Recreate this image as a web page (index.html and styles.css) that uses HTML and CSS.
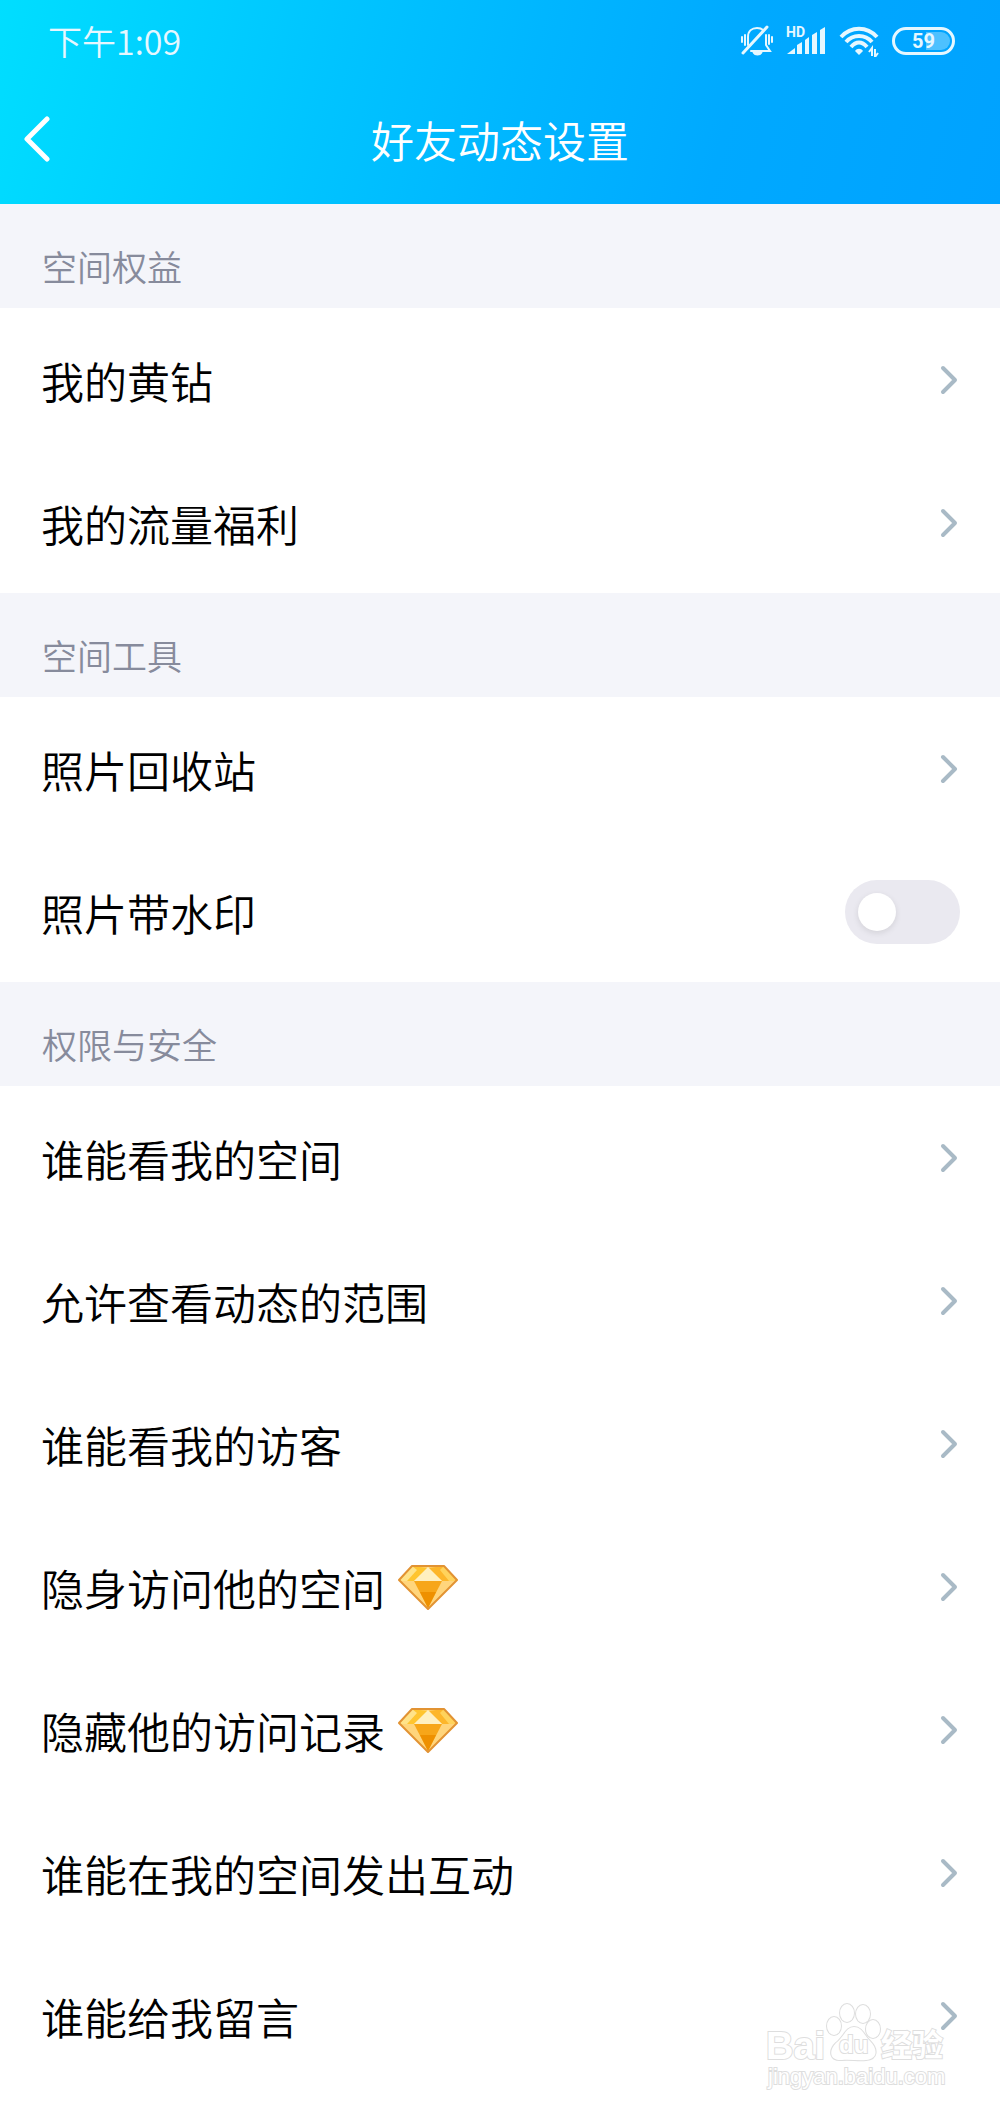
FILE: index.html
```html
<!DOCTYPE html>
<html lang="zh-CN">

<head>
  <meta charset="UTF-8">
  <meta name="viewport" content="width=device-width, initial-scale=1.0">
  <title>好友动态设置</title>
  <link rel="stylesheet" href="styles.css">
</head>

<body>
  <!-- Shapes used more than once -->
  <svg class="sprite" aria-hidden="true">
    <symbol id="arrow" viewBox="0 0 18 30">
      <path d="M3 3 L15 15 L3 27" fill="none" stroke="#a9bac6" stroke-width="4" stroke-linecap="round" stroke-linejoin="round" />
    </symbol>
    <symbol id="diamond" viewBox="0 0 60 45">
      <path d="M14 1 H46 L59 15 L30 44 L1 15 Z" fill="#ffd57c" />
      <path d="M14 1 L30 3 L16 16 H1 Z" fill="#ffc52f" />
      <path d="M46 1 L30 3 L44 16 H59 Z" fill="#fdb62a" />
      <path d="M14 1 L1 16 H9 L19 5 Z" fill="#ffe389" />
      <path d="M46 1 L59 16 H51 L42 5 Z" fill="#ffd35c" />
      <path d="M30 2 L44 16 H16 Z" fill="#fff0c0" />
      <path d="M16 16 H44 L30 43 Z" fill="#f7a619" />
      <path d="M22 27 H38 L30 43 Z" fill="#ee9000" />
      <path d="M14 1 H46 L59 15 L30 44 L1 15 Z" fill="none" stroke="#e29333" stroke-width="2" stroke-linejoin="round" />
    </symbol>
  </svg>

  <header class="header">
    <div class="status-bar">
      <span class="time">下午1:09</span>
      <div class="status-icons">
        <!-- Muted bell -->
        <svg width="32" height="32" viewBox="0 0 32 32" fill="none" stroke="#e6f7ff" stroke-width="2" stroke-linecap="round">
          <path d="M7 20 V12 C7 6 11 3 16 3 C19 3 21 4 22 5" />
          <path d="M25 10 V20 L29 26 H10" />
          <path d="M2 28 L26 2" stroke-width="3" />
          <path d="M1 12 V17 M4 10 V20 M28 10 V19 M31 12 V17" />
          <path d="M13 28 H20 C19 30 14 30 13 28 Z" fill="#e6f7ff" />
        </svg>
        <!-- Signal -->
        <svg width="40" height="32" viewBox="0 0 40 32" fill="#e6f7ff">
          <text class="hd" x="0" y="12">HD</text>
          <path d="M1 29 L9 23 V29 Z" />
          <path d="M11 20 L16 17 V29 H11 Z" />
          <path d="M19 15 L23 12 V29 H19 Z" />
          <path d="M26 10 L31 7 V29 H26 Z" />
          <path d="M34 5 L39 2 V29 H34 Z" />
        </svg>
        <!-- Wifi -->
        <svg width="40" height="32" viewBox="0 0 40 32" fill="none" stroke="#e6f7ff" stroke-width="4">
          <path d="M2 12 C12 1 28 1 38 12" />
          <path d="M7 17 C14 9 26 9 33 17" />
          <path d="M12 22 C17 16 23 16 28 22" />
          <path d="M20 30 L16 26 C18 23 22 23 24 26 Z" fill="#e6f7ff" stroke="none" />
          <path d="M30 27 L33 23 V31 M36 32 V24 M36 32 L39 28" stroke-width="2" />
        </svg>
        <span class="battery">59</span>
      </div>
    </div>
    <div class="title-bar">
      <button class="back" type="button" aria-label="返回">
        <svg width="26" height="46" viewBox="0 0 26 46">
          <path d="M23 3 L3 23 L23 43" fill="none" stroke="#fff" stroke-width="5" stroke-linecap="round" stroke-linejoin="round" />
        </svg>
      </button>
      <h1>好友动态设置</h1>
    </div>
  </header>

  <main>
    <h2>空间权益</h2>
    <div class="list">
      <a class="row" href="#">我的黄钻<svg class="arrow"><use href="#arrow" /></svg></a>
      <a class="row" href="#">我的流量福利<svg class="arrow"><use href="#arrow" /></svg></a>
    </div>

    <h2>空间工具</h2>
    <div class="list">
      <a class="row" href="#">照片回收站<svg class="arrow"><use href="#arrow" /></svg></a>
      <label class="row">照片带水印<input class="switch" type="checkbox"></label>
    </div>

    <h2>权限与安全</h2>
    <div class="list">
      <a class="row" href="#">谁能看我的空间<svg class="arrow"><use href="#arrow" /></svg></a>
      <a class="row" href="#">允许查看动态的范围<svg class="arrow"><use href="#arrow" /></svg></a>
      <a class="row" href="#">谁能看我的访客<svg class="arrow"><use href="#arrow" /></svg></a>
      <a class="row" href="#">隐身访问他的空间<svg class="diamond"><use href="#diamond" /></svg><svg class="arrow"><use href="#arrow" /></svg></a>
      <a class="row" href="#">隐藏他的访问记录<svg class="diamond"><use href="#diamond" /></svg><svg class="arrow"><use href="#arrow" /></svg></a>
      <a class="row" href="#">谁能在我的空间发出互动<svg class="arrow"><use href="#arrow" /></svg></a>
      <a class="row" href="#">谁能给我留言<svg class="arrow"><use href="#arrow" /></svg></a>
    </div>
  </main>

  <!-- Watermark over the bottom corner -->
  <svg class="watermark" width="190" height="90" viewBox="0 0 190 90">
    <g fill="#fff" stroke="#dedede" stroke-width="2" paint-order="stroke">
      <text class="wm-brand" x="6" y="58">Bai</text>
      <ellipse cx="74" cy="25" rx="7" ry="9" />
      <ellipse cx="87" cy="12" rx="7" ry="9" />
      <ellipse cx="103" cy="13" rx="7" ry="9" />
      <ellipse cx="113" cy="28" rx="7" ry="9" />
      <path d="M94 26 C102 26 104 34 110 40 C118 48 118 58 106 59 C98 60 90 58 82 59 C70 60 68 50 76 42 C84 36 86 26 94 26 Z" />
      <text class="wm-du" x="79" y="52">du</text>
      <text class="wm-cn" x="121" y="55">经验</text>
      <text class="wm-url" x="8" y="83">jingyan.baidu.com</text>
    </g>
  </svg>
</body>

</html>
```
FILE: styles.css
```css
* {
  box-sizing: border-box;
}

body {
  position: relative;
  margin: 0;
  min-height: 100vh;
  background-color: #fff;
  color: #000;
  font-family: "Noto Sans CJK SC", sans-serif;
  font-weight: 350;
}

.sprite {
  position: absolute;
  width: 0;
  height: 0;
}

/* Header */
.header {
  height: 204px;
  background: linear-gradient(105deg, #00deff 0%, #00c4ff 33%, #00b6ff 52%, #00a9ff 72%, #00a2ff 100%);
  color: #fff;
}

.status-bar {
  display: flex;
  justify-content: space-between;
  align-items: center;
  height: 82px;
  padding: 0 45px 0 48px;
}

.time {
  font-size: 34px;
  line-height: 40px;
  color: #e6f7ff;
}

.status-icons {
  display: flex;
  align-items: center;
  gap: 13px;
}

.hd {
  font: bold 14px Roboto, sans-serif;
}

.battery {
  width: 63px;
  height: 28px;
  border: 3px solid #e6f7ff;
  border-radius: 14px;
  background: linear-gradient(90deg, transparent 55%, #4dc1ff 55%) content-box;
  padding: 2px;
  color: #e6f7ff;
  font: bold 20px/18px Roboto, sans-serif;
  text-align: center;
}

.title-bar {
  display: grid;
  grid-template-columns: 100px 1fr 100px;
  align-items: center;
  height: 114px;
}

.back {
  display: flex;
  align-items: center;
  height: 100px;
  padding: 0 0 0 24px;
  border: 0;
  background: none;
  cursor: pointer;
}

h1 {
  margin: 0;
  font-size: 43px;
  line-height: 60px;
  font-weight: 350;
  text-align: center;
}

/* Settings list */
h2 {
  margin: 0;
  padding: 36px 42px 16px;
  background-color: #f4f5fa;
  color: #878b9c;
  font-size: 35px;
  line-height: 52px;
  font-weight: 350;
}

.list {
  display: grid;
  gap: 1px;
}

.row {
  display: flex;
  align-items: center;
  height: 142px;
  padding: 2px 40px 0 41px;
  color: #000;
  font-size: 43px;
  line-height: 60px;
  text-decoration: none;
}

.arrow {
  width: 18px;
  height: 30px;
  margin: 0 2px 0 auto;
}

.diamond {
  width: 60px;
  height: 45px;
  margin-left: 13px;
}

.switch {
  appearance: none;
  display: flex;
  align-items: center;
  width: 115px;
  height: 64px;
  margin: 0 0 0 auto;
  padding: 0 13px;
  border-radius: 32px;
  background-color: #eae9f0;
}

.switch::before {
  content: "";
  width: 38px;
  height: 38px;
  border-radius: 50%;
  background-color: #fff;
  box-shadow: 0 2px 6px rgba(0, 0, 0, 0.1);
}

.switch:checked {
  justify-content: flex-end;
  background-color: #00b8ff;
}

.watermark {
  position: absolute;
  right: 50px;
  bottom: 20px;
}

.wm-brand {
  font: bold 38px "Liberation Sans", sans-serif;
}

.wm-du {
  font: bold 24px "Liberation Sans", sans-serif;
}

.wm-cn {
  font: bold 31px "Noto Sans CJK SC", sans-serif;
}

.wm-url {
  font: 22px "Liberation Sans", sans-serif;
}
```
